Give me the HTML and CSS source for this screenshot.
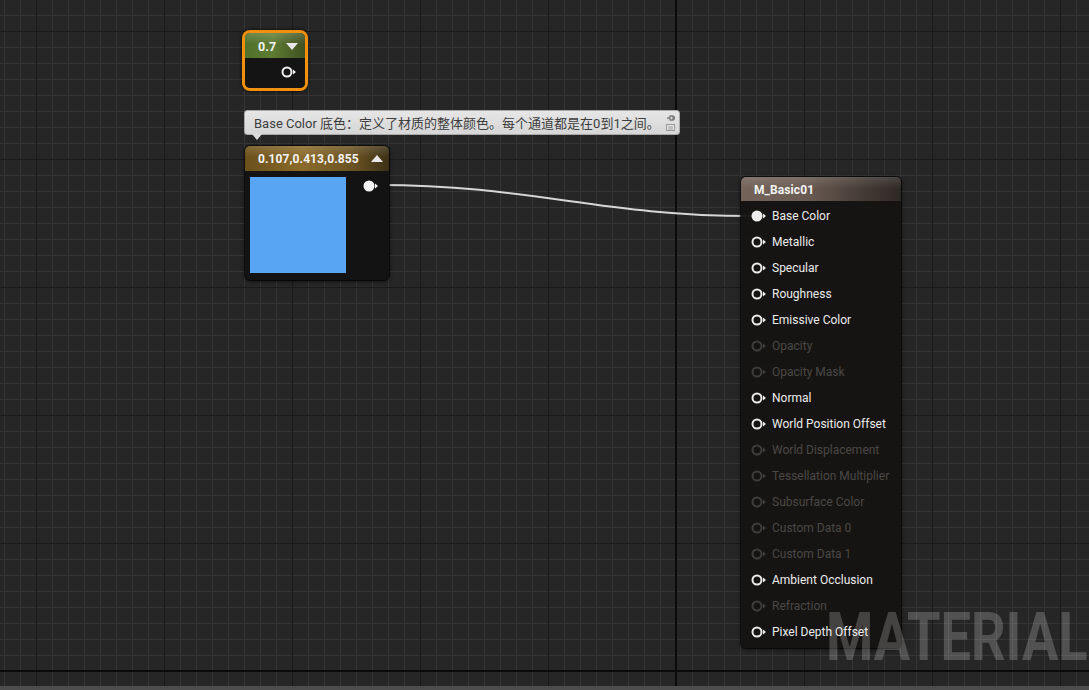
FILE: index.html
```html
<!DOCTYPE html>
<html>
<head>
<meta charset="utf-8">
<link rel="stylesheet" href="styles.css">
</head>
<body>
<div class="app">
  <div class="canvas">
    <svg class="wires" width="1089" height="686" viewBox="0 0 1089 686">
      <path d="M378 185 C 530 185, 600 216, 752 216" fill="none" stroke="#d6d6d6" stroke-width="2"/>
    </svg>

    <div class="node scalar">
      <div class="hdr hdr-green">
        <span class="hdr-text">0.7</span>
        <svg class="tri" width="12" height="7" viewBox="0 0 12 7"><path d="M0 0 H12 L6 7Z" fill="#e8e8e8"/></svg>
      </div>
      <div class="scalar-body">
        <svg class="pin" width="16" height="12" viewBox="0 0 16 12"><circle cx="6" cy="6" r="4.5" fill="none" stroke="#f2f2f2" stroke-width="2"/><path d="M12 3.5 L15 6 L12 8.5Z" fill="#f2f2f2"/></svg>
      </div>
    </div>

    <div class="tooltip">
      <span class="tip-text">Base Color 底色：定义了材质的整体颜色。每个通道都是在0到1之间。</span>
      <div class="tip-icons">
        <svg width="9" height="8" viewBox="0 0 9 8"><path d="M1 4 H4 M4 1.5 V6.5 M4 2 H7 V6 H4 M7 3 H8.5 V5 H7" fill="none" stroke="#7a7a7a" stroke-width="1.3"/></svg>
        <svg width="9" height="7" viewBox="0 0 9 7"><rect x="0.5" y="0.5" width="8" height="6" fill="#e4e4e4" stroke="#9a9a9a"/><path d="M2 3 H7 M2 5 H7" stroke="#9a9a9a"/></svg>
      </div>
      <svg class="tip-arrow" width="10" height="6" viewBox="0 0 10 6"><path d="M0 0 H10 L5 6Z" fill="#dcdcdc"/></svg>
    </div>

    <div class="node color">
      <div class="hdr hdr-gold">
        <span class="hdr-text">0.107,0.413,0.855</span>
        <svg class="tri" width="12" height="7" viewBox="0 0 12 7"><path d="M0 7 H12 L6 0Z" fill="#e8e8e8"/></svg>
      </div>
      <div class="color-body">
        <div class="swatch"></div>
        <svg class="pin" width="16" height="12" viewBox="0 0 16 12"><circle cx="6" cy="6" r="5.5" fill="#f4f4f4"/><path d="M12 3.5 L15 6 L12 8.5Z" fill="#f4f4f4"/></svg>
      </div>
    </div>

    <div class="node material">
      <div class="hdr hdr-brown">
        <span class="hdr-text">M_Basic01</span>
      </div>
      <div class="pins">
        <div class="row on"><svg width="16" height="12" viewBox="0 0 16 12"><circle cx="6" cy="6" r="5.5" fill="currentColor"/><path d="M12 3.5 L15 6 L12 8.5Z" fill="currentColor"/></svg><span>Base Color</span></div>
        <div class="row on"><svg width="16" height="12" viewBox="0 0 16 12"><circle cx="6" cy="6" r="4.5" fill="none" stroke="currentColor" stroke-width="2"/><path d="M12 3.5 L15 6 L12 8.5Z" fill="currentColor"/></svg><span>Metallic</span></div>
        <div class="row on"><svg width="16" height="12" viewBox="0 0 16 12"><circle cx="6" cy="6" r="4.5" fill="none" stroke="currentColor" stroke-width="2"/><path d="M12 3.5 L15 6 L12 8.5Z" fill="currentColor"/></svg><span>Specular</span></div>
        <div class="row on"><svg width="16" height="12" viewBox="0 0 16 12"><circle cx="6" cy="6" r="4.5" fill="none" stroke="currentColor" stroke-width="2"/><path d="M12 3.5 L15 6 L12 8.5Z" fill="currentColor"/></svg><span>Roughness</span></div>
        <div class="row on"><svg width="16" height="12" viewBox="0 0 16 12"><circle cx="6" cy="6" r="4.5" fill="none" stroke="currentColor" stroke-width="2"/><path d="M12 3.5 L15 6 L12 8.5Z" fill="currentColor"/></svg><span>Emissive Color</span></div>
        <div class="row off"><svg width="16" height="12" viewBox="0 0 16 12"><circle cx="6" cy="6" r="4.5" fill="none" stroke="currentColor" stroke-width="2"/><path d="M12 3.5 L15 6 L12 8.5Z" fill="currentColor"/></svg><span>Opacity</span></div>
        <div class="row off"><svg width="16" height="12" viewBox="0 0 16 12"><circle cx="6" cy="6" r="4.5" fill="none" stroke="currentColor" stroke-width="2"/><path d="M12 3.5 L15 6 L12 8.5Z" fill="currentColor"/></svg><span>Opacity Mask</span></div>
        <div class="row on"><svg width="16" height="12" viewBox="0 0 16 12"><circle cx="6" cy="6" r="4.5" fill="none" stroke="currentColor" stroke-width="2"/><path d="M12 3.5 L15 6 L12 8.5Z" fill="currentColor"/></svg><span>Normal</span></div>
        <div class="row on"><svg width="16" height="12" viewBox="0 0 16 12"><circle cx="6" cy="6" r="4.5" fill="none" stroke="currentColor" stroke-width="2"/><path d="M12 3.5 L15 6 L12 8.5Z" fill="currentColor"/></svg><span>World Position Offset</span></div>
        <div class="row off"><svg width="16" height="12" viewBox="0 0 16 12"><circle cx="6" cy="6" r="4.5" fill="none" stroke="currentColor" stroke-width="2"/><path d="M12 3.5 L15 6 L12 8.5Z" fill="currentColor"/></svg><span>World Displacement</span></div>
        <div class="row off"><svg width="16" height="12" viewBox="0 0 16 12"><circle cx="6" cy="6" r="4.5" fill="none" stroke="currentColor" stroke-width="2"/><path d="M12 3.5 L15 6 L12 8.5Z" fill="currentColor"/></svg><span>Tessellation Multiplier</span></div>
        <div class="row off"><svg width="16" height="12" viewBox="0 0 16 12"><circle cx="6" cy="6" r="4.5" fill="none" stroke="currentColor" stroke-width="2"/><path d="M12 3.5 L15 6 L12 8.5Z" fill="currentColor"/></svg><span>Subsurface Color</span></div>
        <div class="row off"><svg width="16" height="12" viewBox="0 0 16 12"><circle cx="6" cy="6" r="4.5" fill="none" stroke="currentColor" stroke-width="2"/><path d="M12 3.5 L15 6 L12 8.5Z" fill="currentColor"/></svg><span>Custom Data 0</span></div>
        <div class="row off"><svg width="16" height="12" viewBox="0 0 16 12"><circle cx="6" cy="6" r="4.5" fill="none" stroke="currentColor" stroke-width="2"/><path d="M12 3.5 L15 6 L12 8.5Z" fill="currentColor"/></svg><span>Custom Data 1</span></div>
        <div class="row on"><svg width="16" height="12" viewBox="0 0 16 12"><circle cx="6" cy="6" r="4.5" fill="none" stroke="currentColor" stroke-width="2"/><path d="M12 3.5 L15 6 L12 8.5Z" fill="currentColor"/></svg><span>Ambient Occlusion</span></div>
        <div class="row off"><svg width="16" height="12" viewBox="0 0 16 12"><circle cx="6" cy="6" r="4.5" fill="none" stroke="currentColor" stroke-width="2"/><path d="M12 3.5 L15 6 L12 8.5Z" fill="currentColor"/></svg><span>Refraction</span></div>
        <div class="row on"><svg width="16" height="12" viewBox="0 0 16 12"><circle cx="6" cy="6" r="4.5" fill="none" stroke="currentColor" stroke-width="2"/><path d="M12 3.5 L15 6 L12 8.5Z" fill="currentColor"/></svg><span>Pixel Depth Offset</span></div>
      </div>
    </div>

    <div class="watermark">MATERIAL</div>
  </div>
  <div class="statusbar"></div>
</div>
</body>
</html>
```

FILE: styles.css
```css
html, body {
  margin: 0;
  padding: 0;
  background: #262626;
  overflow: hidden;
}

.app {
  width: 1089px;
  height: 690px;
  display: flex;
  flex-direction: column;
  font-family: Roboto, "Noto Sans", "Noto Sans CJK SC", sans-serif;
}

.canvas {
  position: relative;
  height: 686px;
  overflow: hidden;
  background-color: #262626;
  background-image:
    linear-gradient(to right, #0b0b0b 2px, transparent 2px),
    linear-gradient(to bottom, #0b0b0b 2px, transparent 2px),
    linear-gradient(to right, #1a1a1a 1px, transparent 1px),
    linear-gradient(to bottom, #1a1a1a 1px, transparent 1px),
    linear-gradient(to right, #353535 1px, transparent 1px),
    linear-gradient(to bottom, #353535 1px, transparent 1px);
  background-size:
    2px 100%,
    100% 2px,
    128px 128px,
    128px 128px,
    16px 16px,
    16px 16px;
  background-position:
    675px 0,
    0 670px,
    36px 31px,
    36px 31px,
    4px 15px,
    4px 15px;
  background-repeat:
    no-repeat,
    no-repeat,
    repeat,
    repeat,
    repeat,
    repeat;
}

.statusbar {
  height: 4px;
  background: #4d4d4d;
}

.wires {
  position: absolute;
  left: 0;
  top: 0;
}

.node {
  position: absolute;
  display: flex;
  flex-direction: column;
  border-radius: 5px;
  box-shadow: 0 1px 4px rgba(0, 0, 0, 0.7), 0 0 0 1px rgba(0, 0, 0, 0.6);
}

.hdr {
  display: flex;
  align-items: center;
  justify-content: space-between;
  box-sizing: border-box;
  border-radius: 5px 5px 0 0;
  color: #f4f4f4;
  font-weight: 700;
  font-size: 12px;
}

.hdr-text {
  letter-spacing: 0.1px;
}

.hdr-green {
  height: 25px;
  padding: 2px 7px 0 13px;
  font-size: 12.5px;
  background:
    linear-gradient(to bottom, rgba(255,255,255,0.16), rgba(255,255,255,0) 45%),
    linear-gradient(to right, #51702a, #5e7c33 45%, #3f5121);
}

.hdr-gold {
  height: 25px;
  padding: 0 6px 0 13px;
  background:
    linear-gradient(to bottom, rgba(255,255,255,0.14), rgba(255,255,255,0) 45%),
    linear-gradient(to right, #6c501a, #8a6b2b 40%, #6a5222 75%, #3c3015);
}

.hdr-brown {
  height: 24px;
  padding: 2px 13px 0;
  background:
    linear-gradient(to bottom, rgba(255,255,255,0.12), rgba(255,255,255,0) 50%),
    linear-gradient(to right, #74645a, #6a5b52 40%, #463c36 75%, #2e2825);
}

/* scalar node (0.7) */
.scalar {
  left: 245px;
  top: 33px;
  width: 60px;
  height: 55px;
  box-shadow: 0 0 0 3px #f0900c, 0 0 3px 4px rgba(0,0,0,0.5);
  border-radius: 5px;
  background: #151515;
}

.scalar-body {
  flex: 1;
  display: flex;
  justify-content: flex-end;
  align-items: center;
  padding: 0 8px 2px 0;
  border-radius: 0 0 5px 5px;
  background: #141414;
}

/* tooltip */
.tooltip {
  position: absolute;
  left: 244px;
  top: 110px;
  width: 436px;
  height: 25px;
  box-sizing: border-box;
  display: flex;
  align-items: center;
  justify-content: space-between;
  padding: 0 4px 0 9px;
  border: 1px solid #a9a9a9;
  border-radius: 3px;
  background: linear-gradient(to bottom, #e6e6e6, #d6d6d6);
  color: #3d3d3d;
  font-family: Roboto, "Noto Sans CJK SC", sans-serif;
  font-size: 13px;
}

.tip-icons {
  display: flex;
  flex-direction: column;
  gap: 2px;
  align-self: flex-start;
  margin-top: 3px;
}

.tip-arrow {
  position: absolute;
  left: 7px;
  bottom: -6px;
}

/* colour node */
.color {
  left: 245px;
  top: 146px;
  width: 144px;
  height: 134px;
  background: #131313;
}

.color-body {
  flex: 1;
  display: flex;
  align-items: flex-start;
  justify-content: space-between;
  padding: 6px 10px 0 5px;
  border-radius: 0 0 5px 5px;
  background: #131313;
}

.swatch {
  width: 96px;
  height: 96px;
  background: #58a5f3;
}

.color-body .pin {
  margin-top: 3px;
}

/* material result node */
.material {
  left: 741px;
  top: 177px;
  width: 160px;
  height: 471px;
  background: rgba(22, 20, 18, 0.96);
}

.pins {
  display: flex;
  flex-direction: column;
  padding: 2px 0 3px 10px;
}

.row {
  height: 26px;
  display: flex;
  align-items: center;
  gap: 5px;
  font-size: 12px;
  white-space: nowrap;
}

.row.on {
  color: #ececec;
}

.row.off {
  color: #3f3d3b;
}

.row.off span {
  color: #4a4846;
}

/* watermark */
.watermark {
  position: absolute;
  left: 826px;
  top: 598px;
  font-family: Roboto, sans-serif;
  font-weight: 700;
  font-size: 66px;
  line-height: 80px;
  color: rgba(255, 255, 255, 0.2);
  transform: scaleX(0.82);
  transform-origin: left top;
  letter-spacing: 0;
  white-space: nowrap;
  pointer-events: none;
}
```
